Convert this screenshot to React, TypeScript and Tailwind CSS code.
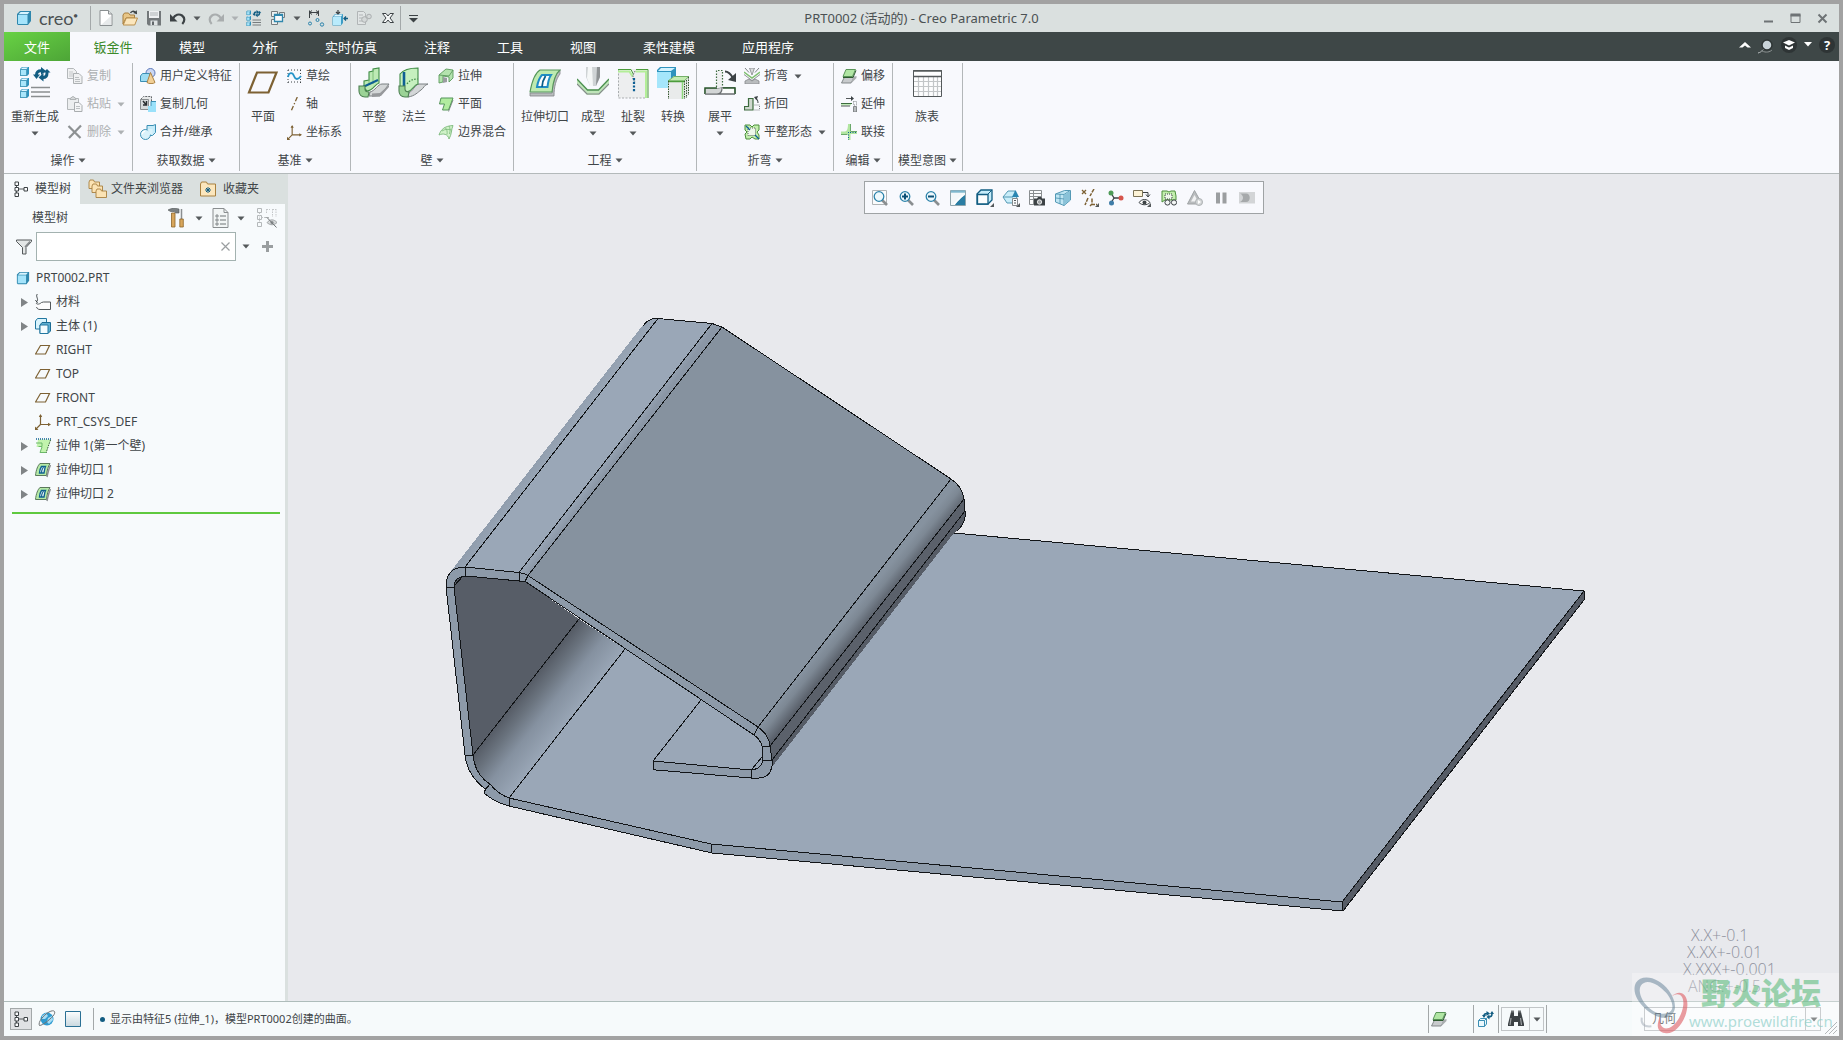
import React from "react";

type Kids = { children?: React.ReactNode };

function Svg({ s = 16, vb, children }: { s?: number; vb?: number } & Kids) {
  const v = vb ?? s;
  return (
    <svg width={s} height={s} viewBox={`0 0 ${v} ${v}`} fill="none" className="block shrink-0" aria-hidden="true">
      {children}
    </svg>
  );
}

const Caret = ({ light = false }: { light?: boolean }) => (
  <svg width="8" height="5" viewBox="0 0 8 5" className="block shrink-0" aria-hidden="true">
    <path d="M0.5 0.5h7L4 4.5z" fill={light ? "#adb1b3" : "#55595b"} />
  </svg>
);

/* ---------- shared icon parts ---------- */
const MiniCube = ({ x, y, s = 8 }: { x: number; y: number; s?: number }) => (
  <g>
    <path d={`M${x} ${y + 2}l2-2h${s - 2}v${s - 2}l-2 2h-${s - 2}z`} fill="#2f93bd" />
    <path d={`M${x + 0.5} ${y + 2.5}h${s - 3}v${s - 3}h-${s - 3}z`} fill="#a9e6fb" stroke="#4595b5" strokeWidth="0.8" />
    <path d={`M${x + 1} ${y + 2}l1.5-1.4h${s - 3.5}l-1.6 1.4z`} fill="#dff6ff" />
  </g>
);

const Spin = ({ c = "#125d82" }: { c?: string }) => (
  <g>
    <path d="M3.500 10V8C3.500 5 5 3.800 8 3.800" stroke={c} strokeWidth="3" />
    <path d="M8 0l5 4-5 4z" fill={c} />
    <path d="M0 7.500h7L3.500 12z" fill={c} />
    <path d="M14 4v2c0 3-1.500 4.500-4 4.500" stroke={c} strokeWidth="3" />
    <path d="M10.500 6l-5 4.500 5 4z" fill={c} />
    <path d="M10.500 5.500h7L14 2z" fill={c} />
  </g>
);

/* ---------- title bar icons ---------- */
const CubeLogo = ({ s = 16 }: { s?: number }) => (
  <Svg s={s} vb={16}>
    <path d="M1 4l3-3h11v10l-3 4H2L1 14z" fill="#2f87ad" />
    <path d="M2 5h9.500v9H2z" fill="#a5e4fb" />
    <path d="M2.500 4.200L4.600 2h8.900l-2 2.200z" fill="#d9f4ff" />
  </Svg>
);
const NewFile = () => (
  <Svg>
    <path d="M2 .5h8.500L14 4v11.500H2z" fill="#fff" stroke="#8a8f91" />
    <path d="M10.500.5V4H14" fill="#e2e5e6" stroke="#8a8f91" />
    <path d="M3 15L13 6v9z" fill="#e7eaeb" />
  </Svg>
);
const OpenFile = () => (
  <Svg>
    <path d="M1 5l1.500-2h4L8 5h4.500v3H4l-3 6z" fill="#e8c687" stroke="#a87f3e" />
    <path d="M4.300 8H15.500l-2.800 7H1.200z" fill="#fbe6bd" stroke="#b98f4c" />
    <path d="M8.500 3c1-2 3-2.200 4.500-1" stroke="#3c4245" strokeWidth="1.300" />
    <path d="M14.800.3l.2 4-3.800-1.200z" fill="#3c4245" />
  </Svg>
);
const SaveFile = () => (
  <Svg>
    <path d="M1 1h14v14.500H2.500L1 14z" fill="#73787a" />
    <path d="M3 1h10v7H3z" fill="#eef0f1" />
    <path d="M4 3h8M4 5h8" stroke="#aeb3b5" />
    <path d="M4.500 10.500h7v5h-7z" fill="#dfe3e4" />
    <path d="M6 11.500h2v3.500H6z" fill="#62676a" />
  </Svg>
);
const Undo = ({ c = "#3c4245" }: { c?: string }) => (
  <Svg>
    <path d="M3 8.500C5 4.500 9 3.500 12 5.500c3 2.200 3 5.800.3 8.500" stroke={c} strokeWidth="2.200" />
    <path d="M0 4v7.500h7.500z" fill={c} />
  </Svg>
);
const Redo = () => (
  <Svg>
    <path d="M13 8.500C11 4.500 7 3.500 4 5.500c-3 2.200-3 5.800-.3 8.500" stroke="#a9adae" strokeWidth="2.200" />
    <path d="M16 4v7.500H8.500z" fill="#a9adae" />
  </Svg>
);
const RegenSmall = () => (
  <Svg vb={32}>
    <MiniCube x={1} y={1} s={9} />
    <MiniCube x={1} y={12} s={9} />
    <MiniCube x={1} y={23} s={9} />
    <g transform="translate(13 0)"><Spin /></g>
    <path d="M13 20h17M13 25h17M13 30h17" stroke="#6c7173" strokeWidth="1.800" />
  </Svg>
);
const RegenBig = () => (
  <Svg s={32}>
    <MiniCube x={1} y={0} s={9} />
    <MiniCube x={1} y={11} s={9} />
    <MiniCube x={1} y={22} s={9} />
    <g transform="translate(14 0)"><Spin /></g>
    <path d="M12 20.500h19M12 25h19M12 29.500h19" stroke="#8a8e90" strokeWidth="1.500" />
  </Svg>
);
const Windows = () => (
  <Svg>
    <path d="M1.500 1.500h6v5h-6zM1.500 9.500h6v5h-6zM9.500 2.500h5v5h-5z" fill="#eef1f1" stroke="#777c7e" />
    <path d="M4.500 4.500h8v7h-8z" fill="#f7fafb" stroke="#2f87ad" strokeWidth="1.300" />
    <path d="M4.500 5.500h8" stroke="#2f87ad" />
  </Svg>
);
const DimIcon = () => (
  <Svg s={18}>
    <path d="M2.500 9V1.500M11.500 7V1.500M2.500 3.500h9" stroke="#3c4245" />
    <path d="M5 1.500L2.500 3.500 5 5.500M9 1.500l2.500 2L9 5.500" stroke="#3c4245" />
    <circle cx="3" cy="14.500" r="1.500" stroke="#2b83ac" />
    <circle cx="10.500" cy="11" r="1.500" stroke="#2b83ac" />
    <circle cx="15" cy="15.500" r="1.700" stroke="#2b83ac" />
  </Svg>
);
const CubePlus = () => (
  <Svg>
    <path d="M.5 7l2.500-3h8v9l-2 2.500H.5z" fill="#3e9cc4" />
    <path d="M1 7h8v8H1z" fill="#b9ebfc" />
    <path d="M1.500 6.500L3.500 4.500h7L9 6.500z" fill="#e2f7ff" />
    <path d="M6 0v3.500M4 2l2 2 2-2" stroke="#3c4245" strokeWidth="1.200" />
    <path d="M16 8.500h-3.500M14 6.500l-2 2 2 2" stroke="#125d82" strokeWidth="1.300" />
  </Svg>
);
const GearGrey = () => (
  <Svg>
    <path d="M1.500 1.500h6l2 2v11h-8z" fill="#e1e5e5" stroke="#b1b5b6" />
    <path d="M3 5h4M3 8h3M3 11h3" stroke="#b1b5b6" />
    <circle cx="8.500" cy="9.500" r="2.800" fill="#d4d8d8" stroke="#aaaeaf" />
    <circle cx="13" cy="6.500" r="2.300" fill="#d4d8d8" stroke="#aaaeaf" />
  </Svg>
);
const CloseX = () => (
  <Svg s={12}>
    <path d="M.5 1.500h3.500l2 2.500 2-2.500h3.500L8 6l3.500 4.500H8L6 8l-2 2.500H.5L4 6z" fill="#f5f7f7" stroke="#3c4245" />
  </Svg>
);

/* ---------- ribbon icons ---------- */
const CopyI = () => (
  <Svg>
    <path d="M.5.500h6l3 3v7h-9z" fill="#f0f1f2" stroke="#b4b8ba" />
    <path d="M2 4h4M2 6h5M2 8h4" stroke="#c4c7c9" />
    <path d="M6.500 5.500h5.500l3 3v7H6.500z" fill="#f0f1f2" stroke="#adb1b3" />
    <path d="M8 9.500h4M8 11.500h5M8 13.500h5" stroke="#bcc0c2" />
  </Svg>
);
const PasteI = () => (
  <Svg>
    <path d="M.5 2.500h11v11H.5z" fill="#eceeef" stroke="#b4b8ba" />
    <path d="M3 3.500l1-2h1c0-1.500 2-1.500 2 0h1l1 2z" fill="#d6d9da" stroke="#b0b4b6" />
    <path d="M7.500 6.500h4.500l3 3v6H7.500z" fill="#f4f5f6" stroke="#a9adaf" />
    <path d="M9 10.500h4M9 12.500h4" stroke="#bcc0c2" />
  </Svg>
);
const DeleteI = () => (
  <Svg>
    <path d="M1.500 2L13.500 14M14 1.500L2 14" stroke="#8d9193" strokeWidth="2.200" />
  </Svg>
);
const UdfI = () => (
  <Svg>
    <circle cx="10.500" cy="5" r="4.500" fill="#c9d6f4" stroke="#5b78b8" />
    <path d="M.5 8l2-2.500h7V12l-2 1.500h-7z" fill="#9ddcf3" stroke="#3b8fb4" />
    <path d="M10.500 4.500L15 14.500c-1.500 1.500-6.500 1.500-8 0z" fill="#f1cf96" stroke="#ab8345" />
  </Svg>
);
const CopyGeomI = () => (
  <Svg>
    <path d="M.5 3.500l3-3h8v6" fill="#e6e8e9" stroke="#62676a" strokeDasharray="2 1" />
    <path d="M.5 3.500h8v10h-8z" fill="#d8dbdc" stroke="#8a8e90" />
    <path d="M3 5l3 3.500M6.500 5v4H3" stroke="#2a2e30" strokeWidth="1.500" />
    <path d="M8 10h3V5.500h5V16H8z" fill="#9ae1fa" />
    <path d="M11 10V5.500h5" stroke="#3b8fb4" />
  </Svg>
);
const MergeI = () => (
  <Svg>
    <path d="M7 1.500h6l2.500-1v8l-3 3H7z" fill="#c5ebf9" stroke="#3b8fb4" />
    <circle cx="5.500" cy="10.500" r="5" fill="#d9f2fb" stroke="#3b8fb4" />
    <path d="M7.500 5h5v5.500h-3" fill="#d9f2fb" />
    <path d="M2 10a4 4 0 0 1 3-3" stroke="#fff" strokeWidth="1.500" />
  </Svg>
);
const PlaneBig = () => (
  <Svg s={32}>
    <path d="M10 5.500h19.500L21.500 25.500H2z" stroke="#7d6133" strokeWidth="2.200" />
  </Svg>
);
const PlaneSmall = () => (
  <Svg>
    <path d="M5.500 3.500h9l-4 8.500h-10z" stroke="#7d6133" strokeWidth="1.200" />
  </Svg>
);
const SketchI = () => (
  <Svg s={15}>
    <path d="M1 1h14M1 13h14M1 1v13M13.500 1v13" stroke="#3c4245" strokeDasharray="1 2" />
    <path d="M1 8c1-5 4.500-5 6-1s4 4 7 0" stroke="#2593c8" strokeWidth="1.800" />
  </Svg>
);
const AxisI = () => (
  <Svg s={15} vb={16}>
    <path d="M11 0L4 16" stroke="#7d6133" strokeWidth="1.400" strokeDasharray="5 2 1.500 2" />
  </Svg>
);
const CsysI = ({ s = 15 }: { s?: number }) => (
  <Svg s={s} vb={16}>
    <path d="M5.500 1v9.500h9M5.500 10.500L1 15" stroke="#7d6133" strokeWidth="1.200" />
    <path d="M3.800 3l1.700-3 1.700 3zM13 8.800l3 1.700-3 1.700zM0 16v-3.500L3.500 16z" fill="#7d6133" />
  </Svg>
);
const FlatBig = () => (
  <Svg s={32}>
    <path d="M12 25c5-1 8-8 12-8h7l-9 12H11z" fill="#d3d6d7" stroke="#7b8082" />
    <path d="M14 30l9-1 8-9v-2l-9 8-8 .5z" fill="#97999c" />
    <path d="M6 21V14l5-1V5l4-1V2l6-1v15c-4 1-6 8-12 8z" fill="#bdeab4" stroke="#3f8c46" strokeWidth="1.100" />
    <path d="M15 4v13M11 13v5" stroke="#6eb56a" strokeWidth="0.800" />
    <path d="M5 20l15-7" stroke="#0e5f94" strokeWidth="2" />
    <path d="M1 19h6v3c0 2 2 3 4 3l-1 5H7c-4 0-6-3-6-6z" fill="#9bd396" stroke="#4d8052" strokeWidth="1.100" />
  </Svg>
);
const FlangeBig = () => (
  <Svg s={32}>
    <path d="M11 25c4 0 5-7 10-8h9c-4 1-4 4-7 6s-6 6-13 7z" fill="#d4d7d8" stroke="#7b8082" />
    <path d="M2 7c4-5 10-6 18-6v16c-5 1-5 7-11 8L2 22z" fill="#c6f0bf" stroke="#3f8c46" strokeWidth="1.100" />
    <path d="M6 5v14" stroke="#0e5f94" strokeWidth="2.600" />
    <path d="M9 17c3-4 6-5 11-5" stroke="#3f8c46" strokeDasharray="1.500 1.500" strokeWidth="1.200" />
    <path d="M1 19h6v3c0 2 2 3 4 3l-1 5H7c-4 0-6-3-6-6z" fill="#9bd396" stroke="#4d8052" strokeWidth="1.100" />
  </Svg>
);
const ExtrudeI = () => (
  <Svg>
    <path d="M1 7l7-6 7 1v8l-4 4V9L5 8v6l-4 1z" fill="#b4e3ae" stroke="#5b9a5c" strokeWidth="0.900" />
    <path d="M1 7l10 1 4-6" stroke="#5b9a5c" strokeWidth="0.900" />
    <path d="M5 9l4 1v4l-4 1z" fill="#9a9da0" />
  </Svg>
);
const FlatWallI = () => (
  <Svg>
    <path d="M4 15.500h6L14.500 4l1 0-4.500 11.500z" fill="#85898b" />
    <path d="M3 2h12l-4.500 12H4.500l2-6H1.500z" fill="#b1ec9f" stroke="#55955a" />
  </Svg>
);
const BoundaryI = () => (
  <Svg>
    <path d="M1 11C3 5 7 2 15 1.500 13 6 14 10 11 15 10 10 5 9 1 11z" fill="#d0f2c8" stroke="#7ab87a" strokeWidth="0.900" />
    <path d="M4 7c3-2 6-2 9.500-1M7 3.500c2 2 2.500 4 2 7M11 2c1 2 1.500 4 .5 8" stroke="#7ab87a" strokeWidth="0.800" />
  </Svg>
);
const CutBig = () => (
  <Svg s={32}>
    <path d="M1 26h22c1-11 3-19 8-23v4c-4 5-6 13-6 22H1z" fill="#b9bcbe" stroke="#808486" strokeWidth="0.800" />
    <path d="M1 25C3 14 6 6 11 3h20c-5 4-7 12-8 22z" fill="#bdeab0" stroke="#55955a" strokeWidth="1.100" />
    <path d="M8 20c1-6 3-10 5-12h9c-2 3-3 7-3.500 12z" fill="#fbfeff" stroke="#1f8cc4" strokeWidth="2" />
    <path d="M13 20c0-4 1-7 3.500-11" stroke="#0a5f8c" strokeWidth="1.800" />
  </Svg>
);
const CutI = () => (
  <Svg>
    <path d="M.5 13.500C1 8 3 3 5 1.500h10c-2 3-3 7-3.500 12z" fill="#b5eaa6" stroke="#5b7a5c" />
    <path d="M12 15c1-5 2-9 3.500-12" stroke="#8b8f91" strokeWidth="1.500" />
    <path d="M4.500 11c0-3 1-5 2-6.500h4c-1 2-1 4-1.500 6.500z" fill="#fff" stroke="#0f6390" strokeWidth="1.400" />
    <path d="M6.500 11c0-3 .5-4 2-6" stroke="#0f6390" strokeWidth="1.200" />
  </Svg>
);
const FormBig = () => (
  <Svg s={32}>
    <path d="M9 0h14v10l-4 9h-6l-4-9z" fill="#cfd3d5" />
    <path d="M11 0h4l1 19h-3l-3-8z" fill="#f5f7f7" />
    <path d="M20 0h3v10l-4 9z" fill="#8e9294" />
    <path d="M0 12l10 10.500h12L32 12v5.500L22 28H10L0 17.500z" fill="#bfe5b9" />
    <path d="M0 12l10.500 11h11L32 12" stroke="#4c9050" strokeWidth="1.300" />
    <path d="M0 17l10 10h12l10-10" stroke="#85898b" strokeWidth="1.200" />
  </Svg>
);
const RipBig = () => (
  <Svg s={32}>
    <path d="M1 2h30v29H1z" fill="#edeeef" />
    <path d="M1.500 3v28h28" stroke="#a9adaf" strokeDasharray="2 1.500" />
    <path d="M1 4.500h11.500l3 5M18.500 4.500H29V31" stroke="#b3ee98" strokeWidth="2" />
    <path d="M1 2.500h13l2.500 5M19 2.500h12V31" stroke="#4c9c3c" />
    <path d="M18 4l-2 4v4l2 3" stroke="#6f7476" strokeDasharray="1.500 1" />
    <path d="M17 11v14" stroke="#0e5f94" strokeWidth="2.200" strokeDasharray="2.200 1.500" />
  </Svg>
);
const ConvertBig = () => (
  <Svg s={32}>
    <path d="M0 3l3-3h16v16l-5 5H0z" fill="#2f93bd" />
    <path d="M0 5h14v16H0z" fill="#a5e6fb" />
    <path d="M1 4L4 1h14l-4 3z" fill="#d3f3ff" />
    <path d="M11 14l6-5h15v19l-4 4H11z" fill="#e9ebeb" />
    <path d="M11 14l6-4.500h15L27 14z" fill="#c4ecb2" stroke="#6aa85e" strokeWidth="0.900" />
    <path d="M11 14.500h16" stroke="#4c9c3c" strokeWidth="1.500" />
    <path d="M25.500 15v17" stroke="#8ed77c" strokeWidth="1.500" />
    <path d="M11.500 14v18M27.500 14v18M29.500 13v18M31.500 10v18" stroke="#34552f" strokeDasharray="1.500 1" />
  </Svg>
);
const UnbendBig = () => (
  <Svg s={32}>
    <path d="M12.500 20V3.500h6V20" fill="#eff0f1" stroke="#3c6b3e" strokeWidth="1.200" strokeDasharray="1.500 1.500" />
    <path d="M1 21.500h12c4 0 3-1 7-1h11v6.500H1z" fill="#fafbfb" stroke="#6b6f71" />
    <path d="M1 21.500h16c1 3-1 5.500-4 5.500H1z" fill="#d3d6d6" />
    <path d="M1 27v-6h12M19 21h12v6" stroke="#2d5a2f" strokeWidth="1.500" />
    <path d="M1 27h30M13 27c4 0 5-3 5-6" stroke="#6b6f71" strokeWidth="1.200" />
    <path d="M21 4.500c4 0 6 3 8 6.500" stroke="#3c4245" strokeWidth="2.200" />
    <path d="M32 6v9l-8-2z" fill="#3c4245" />
  </Svg>
);
const BendI = () => (
  <Svg>
    <path d="M1 16v-3l4-2 3 2 3-2 4 2v3z" fill="#b9bcbe" stroke="#85898b" strokeWidth="0.800" />
    <path d="M5.500 0L8 7l2.500-7z" fill="#d9dbdc" stroke="#85898b" strokeWidth="0.800" />
    <path d="M0 4l8 6 8-6" stroke="#7fc070" strokeWidth="1.500" />
    <path d="M0 6.500l8 6 8-6" stroke="#85898b" strokeWidth="0.900" />
    <path d="M1 0l4 4.500M15 0l-4 4.500" stroke="#6f7476" strokeWidth="0.900" />
  </Svg>
);
const BendBackI = () => (
  <Svg>
    <path d="M.5 10.500h4v-8h4.500V14H.5z" fill="#cfd8cf" stroke="#3c6b3e" strokeWidth="1.200" />
    <path d="M10.500 14h5V9h-5" stroke="#7b8082" strokeDasharray="1 1" />
    <path d="M14 7c0-3-1-4-2.500-5" stroke="#3c4245" />
    <path d="M14 0l-4 1 2.500 3.500z" fill="#3c4245" />
  </Svg>
);
const FlatPatternI = () => (
  <Svg>
    <path d="M1 1h5l2 2 2-2h5v5l-2 2 2 3v4h-4l-3-2-2 2H2l-1-5 2-2-2-2z" fill="#c2efad" stroke="#4c8f3c" />
    <path d="M4 4h7.500v7.500H4z" fill="#eef8ea" stroke="#3c4245" strokeDasharray="1 1" strokeWidth="0.800" />
    <path d="M2 2l4 4M11 11l4 4" stroke="#0e5f94" strokeWidth="1.300" />
  </Svg>
);
const OffsetI = () => (
  <Svg>
    <path d="M3.500 9h10L10 15H.5z" fill="#c8cbcd" stroke="#7b8082" strokeWidth="0.900" />
    <path d="M10 15.500L15.500 10V8L12 9z" fill="#a9adaf" />
    <path d="M5 1.500h9.500L11.500 8.500H2z" fill="#b1e6a4" stroke="#4c8a4c" strokeWidth="0.900" />
    <path d="M2 9.500h10l3-7" stroke="#2d5a2f" />
  </Svg>
);
const ExtendI = () => (
  <Svg>
    <path d="M0 7.500h11" stroke="#3c6b3e" />
    <path d="M0 8.800h10" stroke="#b1e6a4" strokeWidth="1.200" />
    <path d="M0 10h9M5 2.500h6" stroke="#54595b" />
    <path d="M10 0v5l3-2.500z" fill="#3c4245" />
    <path d="M12.500 5.500h3V9h-3z" stroke="#85898b" strokeDasharray="1 1" />
    <path d="M12.500 10.500h3V16h-3z" fill="#b9bcbe" stroke="#6f7476" strokeWidth="0.800" />
  </Svg>
);
const JoinI = () => (
  <Svg>
    <path d="M0 7.500h4c2 0 3-3 3-7.500h2.500v7H16v3H9.500v6H7v-6H0z" fill="#b1e6a0" />
    <path d="M0 10.500h6.500M9.500 7.500H16M9.500 0v7" stroke="#6aa86a" />
    <path d="M7.500 8v8M9 8.500h7" stroke="#0e5f94" strokeDasharray="1 1.500" />
  </Svg>
);
const TableBig = () => (
  <Svg s={32}>
    <path d="M2.500 3.500h28v26h-28z" fill="#fdfdfe" />
    <path d="M3 14.500h27M3 19.500h27M3 24.500h27M7.500 9v20M12.500 9v20M17.500 9v20M22.500 9v20M26.500 9v20" stroke="#c3c6c8" strokeWidth="1.200" />
    <path d="M2.500 3.500h28v26h-28z" stroke="#54595b" />
    <path d="M2 4h29M3 9.500h27" stroke="#54595b" strokeWidth="1.300" />
  </Svg>
);

/* ---------- side panel icons ---------- */
const TreeI = () => (
  <Svg>
    <path d="M3.500 4v8M3.500 8H11" stroke="#54595b" />
    <path d="M2 1h3.500v3.500H2zM2 6.500h3.500V10H2zM2 12h3.500v3.500H2zM11 6.500h3.500V10H11z" fill="#fbfcfd" stroke="#3c4245" />
  </Svg>
);
const FolderPath = ({ x, y }: { x: number; y: number }) => (
  <path d={`M${x} ${y + 2}l1-2h3.500l1 2h5v6.500h-10.500z`} fill="#fbe3b4" stroke="#a8803f" strokeWidth="0.900" />
);
const FoldersI = () => (
  <Svg s={20}>
    <FolderPath x={1} y={1} />
    <FolderPath x={4} y={5} />
    <FolderPath x={8} y={10} />
  </Svg>
);
const FavI = () => (
  <Svg>
    <path d="M.5 3l1-2h5l1 2h8v12H.5z" fill="#fbe6bd" stroke="#a8803f" />
    <path d="M8 6v6M5 9h6M6 7l4 4M10 7l-4 4" stroke="#125d82" />
  </Svg>
);
const ToolsI = () => (
  <Svg s={20}>
    <path d="M1 2c3-2 7-2 11-1v4H8.500L7 3.500H3.500z" fill="#7b8082" stroke="#54595b" strokeWidth="0.600" />
    <path d="M4.500 5h3.500v14H4.500z" fill="#d8a65c" stroke="#8d652a" strokeWidth="0.800" />
    <path d="M14.500 1v10" stroke="#8a8e90" strokeWidth="1.500" />
    <path d="M12.800 11h3.500v8h-3.500z" fill="#d8a65c" stroke="#8d652a" strokeWidth="0.800" />
  </Svg>
);
const ListI = () => (
  <Svg s={20}>
    <path d="M2 .500h11l4 4v15H2z" fill="#f2f5f5" stroke="#8a8e90" />
    <path d="M13 .500v4h4" stroke="#8a8e90" />
    <path d="M5 7h2v2H5zM5 11h2v2H5zM5 15h2v2H5z" stroke="#6f7476" strokeWidth="0.800" />
    <path d="M9 8h6M9 12h6M9 16h6" stroke="#6f7476" />
  </Svg>
);
const HideTreeI = () => (
  <Svg s={20}>
    <path d="M.5.500h4v4h-4zM.5 7.500h4v4h-4zM.5 14.500h4v4h-4zM8 9.500h4" stroke="#b4b8ba" />
    <path d="M2.500 4.500v10M4.500 9.500H8M9.500 1v5M9.500 1.500H13M15.500 1v8M19 1v8M15.500 1.500H19" stroke="#c4c7c9" strokeDasharray="1.500 1" />
    <path d="M10 14.500c3-3.500 7-3.500 10 0-3 3-7 3-10 0z" fill="#d6d9da" stroke="#9ea2a4" />
    <circle cx="15" cy="14.500" r="1.600" fill="#8a8e90" />
    <path d="M10 9.500l9.500 10" stroke="#6f7476" />
  </Svg>
);
const FunnelI = () => (
  <Svg>
    <path d="M.5 1h15v1.500L10 8.500V15H6.500V8.500L.5 2.500z" fill="#e3e6e6" stroke="#54595b" />
    <path d="M9 8l5-5.500" stroke="#85898b" strokeWidth="1.500" />
  </Svg>
);
const MaterialI = () => (
  <Svg>
    <path d="M2.500 0C0 2 4 5 2 7.500M.5 6l2 3" stroke="#3c4245" />
    <path d="M1 9c1 2 4 1 5.500-.5l2-.5h7v7.500H5c-2 0-3-1-3.500-2.500" fill="#fdfdfe" stroke="#54595b" />
  </Svg>
);
const BodyI = () => (
  <Svg>
    <path d="M.5 3L2.500.500h9V9l-2 2h-9z" fill="#d9f4fd" stroke="#2277a0" />
    <path d="M5 7l2-2.500h8.500V13L13 15.500H5z" fill="#5fb0d2" stroke="#1c6c94" />
    <path d="M5 7h8v8.500H5z" fill="#f3fcff" stroke="#2277a0" />
  </Svg>
);
const WallI = () => (
  <Svg>
    <path d="M3 1.500h12.500l-4 13H5l2-5.500H1.500z" fill="#c2f3ad" />
    <path d="M1 1h15" stroke="#0e5f94" strokeDasharray="1 1" strokeWidth="1.500" />
    <path d="M15.500 2l-4.500 13" stroke="#2d5a2f" strokeDasharray="1.500 1" />
    <path d="M1 5h6v3.500H3.500M7 9L5 14.500h6" stroke="#6cb86a" />
  </Svg>
);

/* ---------- view toolbar icons ---------- */
const Lens = ({ kind }: { kind: "fit" | "in" | "out" }) => (
  <Svg>
    {kind === "fit" && <path d="M.5.500h14v14H.5z" fill="#fbfcfd" stroke="#b0b4b6" />}
    <path d="M10 10l5 5" stroke="#8a8e90" strokeWidth="2.600" />
    <circle cx="7" cy="6.500" r="4.800" fill="#eef8fc" stroke="#2d83aa" strokeWidth="1.300" />
    {kind !== "fit" && <path d="M4 6.500h6" stroke="#0c5076" strokeWidth="2" />}
    {kind === "in" && <path d="M7 3.500v6" stroke="#0c5076" strokeWidth="2" />}
  </Svg>
);
const RepaintI = () => (
  <Svg>
    <path d="M.5.500h15v15H.5z" fill="#c5dfe8" stroke="#8fa5ad" />
    <path d="M1 3h14v2L5 15H1z" fill="#f3f8fa" />
    <path d="M15 5C9 9 7 12 5 15h10z" fill="#2a7da3" />
    <path d="M1 1.500h14" stroke="#7fb8cf" strokeWidth="2" />
    <path d="M13 5l-7 7-2 2" stroke="#fff" strokeWidth="1.500" />
  </Svg>
);
const FlyTri = () => <path d="M18 14v4h-4z" fill="#54595b" />;
const StyleI = () => (
  <Svg s={18}>
    <path d="M1 5l4-4h11v10l-4 4H1z" fill="#c5ecfa" stroke="#125d82" strokeWidth="1.300" />
    <path d="M1.500 5.500H12V15H1.500z" fill="#fbfdfe" stroke="#125d82" strokeWidth="1.300" />
    <path d="M12 5l4-4" stroke="#125d82" />
    <FlyTri />
  </Svg>
);
const OrientI = () => (
  <Svg s={18}>
    <path d="M1 8l5-6h7l2 6-4 6H5z" fill="#c9edf9" stroke="#5499b5" />
    <path d="M1 8h10" stroke="#5499b5" />
    <path d="M10 8l3.500-7L17 8z" fill="#2a86b2" />
    <path d="M10.500 9.500h5v7h-5z" fill="#fbfcfd" stroke="#85898b" />
    <path d="M12 11.500h2M12 14h2" stroke="#54595b" />
    <FlyTri />
  </Svg>
);
const CamTableI = () => (
  <Svg>
    <path d="M.5.500h12v14H.5z" fill="#fbfcfd" stroke="#8a8e90" />
    <path d="M1 3.500h11M1 6.500h11M1 9.500h11M4.500 1v13" stroke="#8a8e90" />
    <path d="M5 8.500h3l1-1.500h3l1 1.500h3v7H5z" fill="#3c4245" />
    <circle cx="10.500" cy="12" r="2.200" fill="#9ea2a4" stroke="#fff" strokeWidth="0.800" />
  </Svg>
);
const PerspI = () => (
  <Svg>
    <path d="M.5 4l9-3.500h6V10L9 15.500.5 12z" fill="#c0e6f3" stroke="#5499b5" />
    <path d="M9 4.500l6-4M9 4.500v11M.5 4L9 4.500M5 4v10M1 8l8 1" stroke="#5499b5" strokeWidth="0.900" />
    <path d="M9 5l6-4v9l-6 5z" fill="#89c2d8" />
  </Svg>
);
const DatumI = () => (
  <Svg s={18}>
    <path d="M1 1l4 4M5 1L1 5" stroke="#7d6133" strokeWidth="1.300" />
    <path d="M13 0L9 7M7 9l-3 7M11 9.500v6h5M11 15l-2 2" stroke="#7d6133" strokeWidth="1.500" strokeDasharray="4 1" />
    <FlyTri />
  </Svg>
);
const SpinCenterI = () => (
  <Svg>
    <path d="M6 8L3 3M6 8l7 0M6 8l-3 5" stroke="#3c4245" strokeWidth="1.300" />
    <circle cx="3" cy="3" r="2.500" fill="#4e9a57" />
    <circle cx="13" cy="8" r="2.500" fill="#d6554c" />
    <circle cx="3.500" cy="13" r="2.500" fill="#3f7da8" />
  </Svg>
);
const AnnoI = () => (
  <Svg s={18}>
    <path d="M.5 1.500h9v6h-9z" fill="#fdf3d6" stroke="#7b7255" />
    <path d="M10 3.500h5v4M13 5.500l2 2.500 2-2.500" stroke="#3c4245" />
    <path d="M6 13.500c3-4 8-4 11 0-3 3-8 3-11 0z" fill="#fff" stroke="#3c4245" />
    <circle cx="11.500" cy="13.500" r="2" fill="#3c4245" />
    <FlyTri />
  </Svg>
);
const GlassesI = () => (
  <Svg>
    <path d="M1 1h5l2 1 2-1h4l1 5v4H4l-3 2z" fill="#c2efad" stroke="#4c8f3c" />
    <path d="M4 4h7v5H4z" fill="#eef8ea" stroke="#3c4245" strokeDasharray="1 1" />
    <circle cx="6.500" cy="12.500" r="2.600" fill="#f4f6f6" stroke="#3c4245" />
    <circle cx="13" cy="12.500" r="2.600" fill="#f4f6f6" stroke="#3c4245" />
  </Svg>
);
const SimI = () => (
  <Svg>
    <path d="M7.500.5L15 14H.5z" fill="#b9bcbe" stroke="#9ea2a4" />
    <path d="M7.500 5L11 11.500H4z" fill="#f1f2f3" />
    <circle cx="12" cy="12" r="3.500" fill="#d3d6d7" stroke="#aeb2b4" />
    <path d="M11 10l3 2-3 2z" fill="#fff" />
  </Svg>
);
const PauseI = () => (
  <Svg>
    <path d="M3 2.500h4v11H3zM9.500 2.500h4v11h-4z" fill="#9b9ea0" />
  </Svg>
);
const StopI = () => (
  <Svg>
    <path d="M0 2h16v11.500H0z" fill="#d3d5d7" />
    <path d="M1 3.500h6c5 0 5 8.500 0 8.500H1c4-2 4-6.500 0-8.500z" fill="#a6a9ab" />
  </Svg>
);

/* ---------- status bar icons ---------- */
const GlobeI = () => (
  <Svg s={18}>
    <circle cx="9" cy="9" r="6.500" fill="#2f9bd0" />
    <path d="M4 6l4-3 2 3-3 3-3 0zM10 8l4-2 1 4-4 4-2-2z" fill="#a5dcf4" />
    <path d="M1.500 15.500c-2-3 4-10.500 9.500-13.500s7.500 0 4 4-10.500 9.500-13.500 9.500z" stroke="#6f7476" />
  </Svg>
);
const SquareI = () => (
  <Svg>
    <defs>
      <linearGradient id="sq" x1="0" y1="0" x2="0" y2="1">
        <stop offset="0" stopColor="#fdfefe" />
        <stop offset="1" stopColor="#c9d8df" />
      </linearGradient>
    </defs>
    <path d="M.5.500h15v15H.5z" fill="url(#sq)" stroke="#2a7094" />
  </Svg>
);
const StatusRegenI = () => (
  <Svg>
    <path d="M.5 9.500l2-2h6V13l-2 2.500h-6z" fill="#eaf8fd" stroke="#3b8fb4" />
    <path d="M.5 9.500h6v6M6.500 9.500l2-2" stroke="#3b8fb4" />
    <path d="M6 5c0-2 1-2.500 3-2.500M14 2.500c0 2.500-.5 3.500-3 3.500" stroke="#125d82" strokeWidth="1.600" />
    <path d="M8.500 0L12 2.500 8.500 5zM11.500 3.500v5L8.500 6zM4 4h4L6 7zM12 3h4l-2-3z" fill="#125d82" />
  </Svg>
);
const BinocularsI = () => (
  <Svg s={18}>
    <path d="M4 2h3v4h4V2h3l3 12v2h-6v-4H7v4H1v-2z" fill="#3c4245" />
    <path d="M4 8l-1 7M13.500 8l1 7" stroke="#9ea2a4" strokeWidth="1.200" />
    <path d="M4 .500h3v2H4zM11 .500h3v2h-3z" fill="#6f7476" />
  </Svg>
);

/* ---------- ribbon building blocks ---------- */
function Big({ icon, label, arrow, w = "w-8" }: { icon: React.ReactNode; label: string; arrow?: boolean; w?: string }) {
  return (
    <button className={`flex h-[84px] shrink-0 flex-col items-center whitespace-nowrap pt-[5px] ${w}`}>
      {icon}
      <span className="mt-2 leading-5">{label}</span>
      {arrow && <span className="mt-1"><Caret /></span>}
    </button>
  );
}
function Small({ icon, label, arrow, off }: { icon: React.ReactNode; label: string; arrow?: boolean; off?: boolean }) {
  return (
    <button className={`flex h-7 items-center gap-1 whitespace-nowrap ${off ? "text-[#adb0b2]" : ""}`}>
      {icon}
      <span>{label}</span>
      {arrow && <span className="ml-0.5"><Caret light={off} /></span>}
    </button>
  );
}
function Group({ w, pl = "pl-[7px]", label, children }: { w: string; pl?: string; label: string } & Kids) {
  return (
    <section className={`flex shrink-0 flex-col pt-px ${w}`}>
      <div className={`flex h-[84px] gap-2 ${pl}`}>{children}</div>
      <button className="flex h-[26px] items-center justify-center gap-[3px] pt-[3px] whitespace-nowrap">
        {label}
        <Caret />
      </button>
    </section>
  );
}
const GroupSep = () => <div className="my-0.5 w-px shrink-0 bg-[#b3b7b9]" />;
const Sep = ({ c = "h-[22px]" }: { c?: string }) => <div className={`w-px shrink-0 bg-[#a3a8a9] ${c}`} />;

function IconButton({ label, className = "", children }: { label: string; className?: string } & Kids) {
  return (
    <button aria-label={label} className={`flex shrink-0 items-center justify-center ${className}`}>
      {children}
    </button>
  );
}

function TitleBar() {
  return (
    <header className="relative flex h-7 shrink-0 items-center bg-[#dae0df]">
      <div className="flex w-[86px] items-center gap-[7px] pl-3">
        <CubeLogo />
        <span className="flex items-start font-['Lato'] text-[18px] leading-5 text-[#4b5153]">creo<sup className="top-0 mt-1 text-[7px] leading-none">●</sup></span>
      </div>
      <Sep c="h-6" />
      <div className="flex items-center pl-[3px]">
        <IconButton label="新建" className="w-6"><NewFile /></IconButton>
        <IconButton label="打开" className="w-6"><OpenFile /></IconButton>
        <IconButton label="保存" className="w-6"><SaveFile /></IconButton>
        <IconButton label="撤消" className="w-6"><Undo /></IconButton>
        <IconButton label="撤消列表" className="w-[14px]"><Caret /></IconButton>
        <IconButton label="重做" className="w-6"><Redo /></IconButton>
        <IconButton label="重做列表" className="w-[14px]"><Caret light /></IconButton>
        <IconButton label="重新生成" className="w-6"><RegenSmall /></IconButton>
        <IconButton label="窗口" className="w-6"><Windows /></IconButton>
        <IconButton label="窗口列表" className="w-[14px]"><Caret /></IconButton>
        <IconButton label="尺寸" className="w-6"><DimIcon /></IconButton>
        <IconButton label="插入" className="w-6"><CubePlus /></IconButton>
        <IconButton label="设置" className="w-6"><GearGrey /></IconButton>
        <IconButton label="关闭窗口" className="w-6"><CloseX /></IconButton>
        <Sep c="h-6" />
        <IconButton label="自定义" className="w-6">
          <svg width="9" height="9" viewBox="0 0 9 9"><path d="M0 1.500h9" stroke="#3c4245" /><path d="M0 4h9L4.500 8.500z" fill="#3c4245" /></svg>
        </IconButton>
      </div>
      <h1 className="pointer-events-none absolute inset-x-0 text-center text-[13px] leading-7 text-[#4b5153]">
        PRT0002 (活动的) - Creo Parametric 7.0
      </h1>
      <div className="ml-auto flex items-center gap-[15px] pr-[11px]">
        <IconButton label="最小化" className="w-3"><Svg s={11}><path d="M1 8.500h9" stroke="#6e7375" strokeWidth="2" /></Svg></IconButton>
        <IconButton label="最大化" className="w-3"><Svg s={11}><path d="M1 1.500h9v8H1z" stroke="#6e7375" /><path d="M.5 2h10" stroke="#6e7375" strokeWidth="3" /></Svg></IconButton>
        <IconButton label="关闭" className="w-3"><Svg s={11}><path d="M1.500 1.500l8 8M9.500 1.500l-8 8" stroke="#6e7375" strokeWidth="2" /></Svg></IconButton>
      </div>
    </header>
  );
}

const tabs = ["模型", "分析", "实时仿真", "注释", "工具", "视图", "柔性建模", "应用程序"];

function MenuBar() {
  return (
    <nav className="flex h-[29px] shrink-0 items-stretch bg-[#3e4747] text-[13px] text-white">
      <button className="w-[66px] bg-linear-to-br from-[#68d244] to-[#4da537]">文件</button>
      <button className="w-[86px] bg-[#f8f9fd] text-[#3c8a2a]">钣金件</button>
      <div className="flex gap-px">
        {tabs.map((t) => (
          <button key={t} className="px-[23px]">{t}</button>
        ))}
      </div>
      <div className="ml-auto flex items-center gap-[7px] pr-1 pb-1">
        <IconButton label="折叠功能区"><svg width="12" height="6" viewBox="0 0 12 6"><path d="M0 5.500L6 0l6 5.500H8.500L6 3.500 3.500 5.500z" fill="#fff" /></svg></IconButton>
        <IconButton label="命令搜索" className="pt-1">
          <Svg>
            <path d="M0 14c4-1 4-3 6-4" stroke="#b9bdbe" />
            <circle cx="9" cy="6" r="5" fill="#c9d3d8" stroke="#2e3535" strokeWidth="1.500" />
            <path d="M4 12c4 2 8 1 10-1" stroke="#8a9090" />
          </Svg>
        </IconButton>
        <IconButton label="学习">
          <Svg>
            <circle cx="8" cy="8" r="8" fill="#2e3435" />
            <path d="M8 3l6 2.500L8 8.500 2 5.500z" fill="#fff" />
            <path d="M4 8.500l4 2 4-2v2.500l-4 2-4-2z" fill="#fff" />
          </Svg>
        </IconButton>
        <IconButton label="学习列表"><svg width="8" height="5" viewBox="0 0 8 5"><path d="M0 0h8L4 4.500z" fill="#fff" /></svg></IconButton>
        <button aria-label="帮助" className="flex size-4 items-center justify-center rounded-full bg-[#2e3435] text-[13px] font-bold">?</button>
      </div>
    </nav>
  );
}

function Ribbon() {
  return (
    <div className="flex h-[113px] shrink-0 border-b border-[#b3b9ba] bg-[#f8f9fd]">
      <Group w="w-[128px]" label="操作">
        <Big w="w-12" icon={<RegenBig />} label="重新生成" arrow />
        <div>
          <Small icon={<CopyI />} label="复制" off />
          <Small icon={<PasteI />} label="粘贴" arrow off />
          <Small icon={<DeleteI />} label="删除" arrow off />
        </div>
      </Group>
      <GroupSep />
      <Group w="w-[106px]" label="获取数据">
        <div>
          <Small icon={<UdfI />} label="用户定义特征" />
          <Small icon={<CopyGeomI />} label="复制几何" />
          <Small icon={<MergeI />} label="合并/继承" />
        </div>
      </Group>
      <GroupSep />
      <Group w="w-[110px]" label="基准">
        <Big icon={<PlaneBig />} label="平面" />
        <div>
          <Small icon={<SketchI />} label="草绘" />
          <Small icon={<AxisI />} label="轴" />
          <Small icon={<CsysI />} label="坐标系" />
        </div>
      </Group>
      <GroupSep />
      <Group w="w-[162px]" label="壁">
        <Big icon={<FlatBig />} label="平整" />
        <Big icon={<FlangeBig />} label="法兰" />
        <div>
          <Small icon={<ExtrudeI />} label="拉伸" />
          <Small icon={<FlatWallI />} label="平面" />
          <Small icon={<BoundaryI />} label="边界混合" />
        </div>
      </Group>
      <GroupSep />
      <Group w="w-[182px]" label="工程">
        <Big w="w-12" icon={<CutBig />} label="拉伸切口" />
        <Big icon={<FormBig />} label="成型" arrow />
        <Big icon={<RipBig />} label="扯裂" arrow />
        <Big icon={<ConvertBig />} label="转换" />
      </Group>
      <GroupSep />
      <Group w="w-[136px]" label="折弯">
        <Big icon={<UnbendBig />} label="展平" arrow />
        <div>
          <Small icon={<BendI />} label="折弯" arrow />
          <Small icon={<BendBackI />} label="折回" />
          <Small icon={<FlatPatternI />} label="平整形态" arrow />
        </div>
      </Group>
      <GroupSep />
      <Group w="w-[58px]" label="编辑">
        <div>
          <Small icon={<OffsetI />} label="偏移" />
          <Small icon={<ExtendI />} label="延伸" />
          <Small icon={<JoinI />} label="联接" />
        </div>
      </Group>
      <GroupSep />
      <Group w="w-[69px]" pl="pl-[18px]" label="模型意图">
        <Big icon={<TableBig />} label="族表" />
      </Group>
      <GroupSep />
    </div>
  );
}

const nodes: { icon: React.ReactNode; label: string; open?: boolean }[] = [
  { icon: <MaterialI />, label: "材料", open: true },
  { icon: <BodyI />, label: "主体 (1)", open: true },
  { icon: <PlaneSmall />, label: "RIGHT" },
  { icon: <PlaneSmall />, label: "TOP" },
  { icon: <PlaneSmall />, label: "FRONT" },
  { icon: <CsysI s={16} />, label: "PRT_CSYS_DEF" },
  { icon: <WallI />, label: "拉伸 1(第一个壁)", open: true },
  { icon: <CutI />, label: "拉伸切口 1", open: true },
  { icon: <CutI />, label: "拉伸切口 2", open: true },
];

function SidePanel() {
  return (
    <aside className="flex w-[284px] shrink-0 flex-col border-r-[3px] border-[#dae0df] bg-[#f7fafc]">
      <div className="-mr-[3px] flex h-[30px] shrink-0 bg-[#dae0df]">
        <button className="flex w-[76px] items-center gap-1.5 bg-[#f7fafc] pl-[9px]"><TreeI />模型树</button>
        <button className="flex w-[112px] items-center gap-[3px] pl-2"><FoldersI />文件夹浏览器</button>
        <button className="flex items-center gap-[7px] pl-2"><FavI />收藏夹</button>
      </div>
      <div className="flex h-7 shrink-0 items-center pr-2 pl-7">
        <span className="mr-auto">模型树</span>
        <IconButton label="设置"><ToolsI /></IconButton>
        <IconButton label="设置列表" className="ml-2"><Caret /></IconButton>
        <IconButton label="显示" className="ml-2"><ListI /></IconButton>
        <IconButton label="显示列表" className="ml-1.5"><Caret /></IconButton>
        <IconButton label="隐藏" className="ml-3"><HideTreeI /></IconButton>
      </div>
      <div className="flex h-[29px] shrink-0 items-center pr-3 pl-3">
        <FunnelI />
        <div className="relative ml-1 h-full flex-1">
          <input aria-label="筛选" className="h-full w-full border border-[#a3b2b0] bg-white px-2 outline-none" />
          <button aria-label="清除" className="absolute top-2.5 right-1.5">
            <Svg s={9}><path d="M.5.500l8 8M8.500.500l-8 8" stroke="#9a9ea0" strokeWidth="1.200" /></Svg>
          </button>
        </div>
        <IconButton label="筛选列表" className="ml-1.5"><Caret /></IconButton>
        <IconButton label="添加" className="ml-3"><Svg s={11}><path d="M5.500 0v11M0 5.500h11" stroke="#9a9ea0" strokeWidth="3" /></Svg></IconButton>
      </div>
      <ul className="mt-[5px]">
        <li className="flex h-6 items-center gap-1.5 pl-3"><CubeLogo s={14} />PRT0002.PRT</li>
        {nodes.map((n) => (
          <li key={n.label} className="flex h-6 items-center gap-[5px] pl-[17px]">
            <span className="mr-0.5 w-[7px]">
              {n.open && <svg width="7" height="9" viewBox="0 0 7 9" className="block"><path d="M0 0l7 4.500L0 9z" fill="#808486" /></svg>}
            </span>
            {n.icon}
            {n.label}
          </li>
        ))}
      </ul>
      <div className="mt-1.5 mr-[5px] ml-2 h-0.5 bg-[#5fc93e]" />
    </aside>
  );
}

const views: [string, React.ReactNode][] = [
  ["重新调整", <Lens kind="fit" />],
  ["放大", <Lens kind="in" />],
  ["缩小", <Lens kind="out" />],
  ["重画", <RepaintI />],
  ["显示样式", <StyleI />],
  ["已保存方向", <OrientI />],
  ["视图管理器", <CamTableI />],
  ["透视图", <PerspI />],
  ["基准显示过滤器", <DatumI />],
  ["旋转中心", <SpinCenterI />],
  ["注释显示", <AnnoI />],
  ["平整预览", <GlassesI />],
  ["仿真", <SimI />],
  ["暂停", <PauseI />],
  ["停止", <StopI />],
];

const INK = "#111417";

function PartModel() {
  return (
    <svg viewBox="288 174 1551 827" className="absolute inset-0 h-full w-full" role="img" aria-label="钣金零件">
      <defs>
        <linearGradient id="outerBend" gradientUnits="userSpaceOnUse" x1="758" y1="727" x2="774" y2="740">
          <stop offset="0" stopColor="#86929f" />
          <stop offset="0.350" stopColor="#7d8894" />
          <stop offset="1" stopColor="#565c66" />
        </linearGradient>
        <linearGradient id="innerBend" gradientUnits="userSpaceOnUse" x1="473" y1="755" x2="516" y2="789">
          <stop offset="0" stopColor="#565c66" />
          <stop offset="0.250" stopColor="#6a737e" />
          <stop offset="0.550" stopColor="#8591a0" />
          <stop offset="1" stopColor="#9aa7b7" />
        </linearGradient>
        <linearGradient id="leftBend" gradientUnits="userSpaceOnUse" x1="451" y1="569" x2="463" y2="578">
          <stop offset="0" stopColor="#8e9bab" />
          <stop offset="1" stopColor="#9aa7b7" />
        </linearGradient>
        <linearGradient id="topBend" gradientUnits="userSpaceOnUse" x1="519" y1="572" x2="527" y2="578">
          <stop offset="0" stopColor="#9aa7b7" />
          <stop offset="1" stopColor="#8a96a5" />
        </linearGradient>
      </defs>
      <g shapeRendering="crispEdges">
        {/* base plate */}
        <path d="M954 533L1584 591 1342 902 711 844 509 798 625 649z" fill="#9aa7b7" />
        <path d="M509 798L711 844 1342 902 1343 911 712 853 509 806z" fill="#8d9aa9" />
        <path d="M1584 591v9L1343 911l-1-9z" fill="#565c66" />
        {/* inside of the lower bend and of the upright wall */}
        <path d="M473 755L579 619 625 649 509 798Q497 793 490 784 475 775 473 755z" fill="url(#innerBend)" />
        <path d="M454 587Q455 577 466 576L519 581 526 582 579 619 473 755z" fill="#575d67" />
        {/* top flange */}
        <path d="M451 571L643 325Q648 319 658 318.500L465 567Q456 567 451 571z" fill="url(#leftBend)" />
        <path d="M658 318.500L712 323.500 519 572.500 465 567z" fill="#9aa7b7" />
        <path d="M712 323.500L722 327 528 575.500 519 572.500z" fill="url(#topBend)" />
        <path d="M722 327L951 479 758 727 528 575.500z" fill="#86929f" />
        {/* outer bend and return flange */}
        <path d="M951 479Q962 485 964 499L770 746Q769 734 758 727z" fill="url(#outerBend)" />
        <path d="M964 499L965 511 772 760 770 746z" fill="#5b616b" />
        <path d="M965 511V517Q964 525 954 533L772 767V760z" fill="#565c66" />
        {/* sheet thickness */}
        <path
          d="M485 789Q467 775 465 755L446 587Q446 567 465 567L519 572.500Q524 573 528 575.500L758 727Q769 735 770 746L772 760V766Q770 778 759 778L751 778 656 770Q653 770 653 767V761L751 770Q762 769 762.500 760L762 746Q760 739 754 735L526 582Q522 581 519 581L466 576Q454 577 454 587L473 755Q475 775 490 784z"
          fill="#8d9aa9"
          stroke={INK}
        />
        <path d="M484 793Q494 802 509 806V798Q498 794 490 784l-6 8z" fill="#8d9aa9" stroke={INK} />
        {/* edges */}
        <g stroke={INK} fill="none">
          <path d="M954 533L1584 591M1584 591L1342 902 711 844 509 798M509 806L712 853 1343 911 1584 600V591M711 844l1 9M1342 902l1 9" />
          <path d="M643 326Q648 318 658 318.500L712 323.500 722 327 951 479Q962 486 964 499L965 511V517Q964 525 957 531" />
          <path d="M658 318.500L465 567M712 323.500L519 572.500M722 327L528 575.500M951 479L758 727M964 499L770 746M965 511L772 760" />
          <path d="M579 619L473 755M625 649L509 798M701 700L653 761M762 757L752 769" />
          <path d="M465 567v9M519 572.500v8.500M528 575.500l-3 6M446 587l9 1M465 755h8M758 727l-4 8M762 746h8M762.500 760H772M751 770v8" />
          <path d="M454 586l9-10" />
        </g>
      </g>
      <g fill="#8e919d" fontFamily="'Open Sans','Noto Sans',sans-serif" fontSize="16" fontWeight="300">
        <text x="1691" y="941">X.X+-0.1</text>
        <text x="1687" y="958">X.XX+-0.01</text>
        <text x="1683" y="975">X.XXX+-0.001</text>
        <text x="1688" y="992">ANG.+-0.5</text>
      </g>
    </svg>
  );
}

function Viewport() {
  return (
    <main className="relative min-w-0 flex-1 overflow-hidden bg-[#e8e9ed]">
      <PartModel />
      <div className="relative flex justify-center pt-[7px]">
        <div className="flex h-[33px] w-[400px] items-center justify-between border border-[#9fa3a5] bg-[#f8f9fd] px-[3px]">
          {views.map(([label, icon]) => (
            <IconButton key={label} label={label} className="size-6">{icon}</IconButton>
          ))}
        </div>
      </div>
    </main>
  );
}

function StatusBar() {
  return (
    <footer className="flex h-[35px] shrink-0 items-center border-t border-[#aebcba] bg-[#f6fafb] pr-[18px] pl-1.5">
      <IconButton label="导航器" className="size-[22px] border border-[#a3a8a9] bg-[#e0e2e4]"><TreeI /></IconButton>
      <IconButton label="浏览器" className="ml-1.5"><GlobeI /></IconButton>
      <IconButton label="全屏" className="ml-[9px]"><SquareI /></IconButton>
      <div className="ml-3"><Sep /></div>
      <span className="ml-1.5 size-[5px] rounded-full bg-[#125d82]" />
      <p className="ml-[5px] whitespace-nowrap text-[11px]">显示由特征5 (拉伸_1)，模型PRT0002创建的曲面。</p>
      <div className="ml-auto flex items-center">
        <Sep c="h-7" />
        <IconButton label="几何状态" className="ml-0.5"><OffsetI /></IconButton>
        <div className="ml-[26px]"><Sep c="h-7" /></div>
        <IconButton label="重新生成状态" className="ml-1"><StatusRegenI /></IconButton>
        <div className="ml-1"><Sep c="h-7" /></div>
        <div className="ml-0.5 flex h-6 border border-[#c1c5c7]">
          <IconButton label="查找" className="w-[27px]"><BinocularsI /></IconButton>
          <IconButton label="查找列表" className="w-[14px] border-l border-[#c1c5c7]"><Caret /></IconButton>
        </div>
        <div className="ml-0.5"><Sep c="h-7" /></div>
        <div className="relative ml-[97px] h-6 w-[177px]">
          <select aria-label="选择过滤器" className="h-full w-full appearance-none border border-[#b4b8ba] bg-[#f9fbfc] pl-[7px]">
            <option>几何</option>
          </select>
          <span className="pointer-events-none absolute inset-y-0 right-0 flex w-4 items-center justify-center border-l border-[#b4b8ba]"><Caret /></span>
        </div>
      </div>
    </footer>
  );
}

function Watermark() {
  return (
    <div className="pointer-events-none absolute right-0 bottom-0 h-[63px] w-[207px] overflow-hidden bg-white/30">
      <svg width="58" height="60" viewBox="0 0 60 62" fill="none" className="absolute top-1 left-0.5" aria-hidden="true">
        <path fillRule="evenodd" d="M2 6C8-4 26 0 36 14s8 26-4 28S-6 22 2 6zM7 9c-5 9 8 29 23 29s10-14 3-22S13 0 7 9z" fill="#5f7d94" opacity="0.500" />
        <path fillRule="evenodd" d="M39 20c8-8 18-3 16 12S42 60 32 58 24 48 27 40c-1 10 2 14 8 13 8-2 15-14 16-24s-5-14-12-9z" fill="#dd5a60" opacity="0.600" />
        <path d="M8 42c-1 6 2 10 10 9" stroke="#9ca6b2" strokeWidth="2" opacity="0.500" />
      </svg>
      <span className="absolute top-0.5 left-[69px] text-[30px] leading-9 font-black whitespace-nowrap text-[#5dbb7d]/60">野火论坛</span>
      <span className="absolute top-9 left-[57px] text-[15px] leading-6 whitespace-nowrap text-[#8fcfc9]/70">www.proewildfire.cn</span>
      <svg width="12" height="12" viewBox="0 0 12 12" className="absolute right-0.5 bottom-0.5" aria-hidden="true">
        <path d="M0 12L12 0M4 12l8-8M8 12l4-4" stroke="#b4b8ba" />
      </svg>
    </div>
  );
}

export default function App() {
  return (
    <div className="relative flex h-screen flex-col overflow-hidden border-4 border-[#a2a2a2] bg-[#f8f9fd] font-['Noto_Sans','Noto_Sans_CJK_SC',sans-serif] text-[12px] leading-4 text-[#3f4548]">
      <TitleBar />
      <MenuBar />
      <Ribbon />
      <div className="flex min-h-0 flex-1">
        <SidePanel />
        <Viewport />
      </div>
      <StatusBar />
      <Watermark />
    </div>
  );
}
